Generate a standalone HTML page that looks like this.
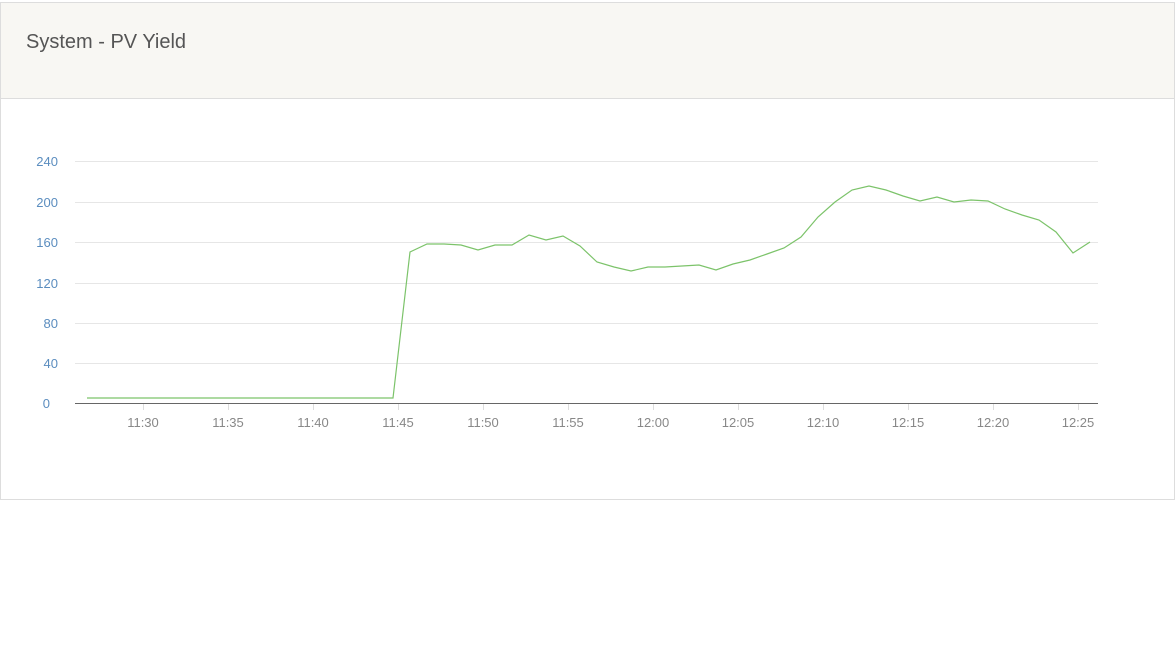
<!DOCTYPE html><html><head><style>
body{margin:0;width:1175px;height:648px;background:#fff;font-family:"Liberation Sans",sans-serif;position:relative;overflow:hidden}
.card{position:absolute;left:0;top:2px;width:1173px;height:496px;border:1px solid #ddd}
.hd{height:95px;background:#f8f7f3;border-bottom:1px solid #ddd;position:relative}
.hd span{position:absolute;left:25px;top:28px;font-size:20px;color:#555}
svg{position:absolute;left:0;top:0}
</style></head><body>
<div class="card"><div class="hd"><span>System - PV Yield</span></div></div>
<svg width="1175" height="648" font-family="Liberation Sans, sans-serif">
<g stroke="#e6e6e6" stroke-width="1">
<line x1="75" x2="1098" y1="161.5" y2="161.5"/><line x1="75" x2="1098" y1="202.5" y2="202.5"/><line x1="75" x2="1098" y1="242.5" y2="242.5"/><line x1="75" x2="1098" y1="283.5" y2="283.5"/><line x1="75" x2="1098" y1="323.5" y2="323.5"/><line x1="75" x2="1098" y1="363.5" y2="363.5"/>
</g>
<g stroke="#ddd"><line x1="143.5" x2="143.5" y1="404" y2="410"/><line x1="228.5" x2="228.5" y1="404" y2="410"/><line x1="313.5" x2="313.5" y1="404" y2="410"/><line x1="398.5" x2="398.5" y1="404" y2="410"/><line x1="483.5" x2="483.5" y1="404" y2="410"/><line x1="568.5" x2="568.5" y1="404" y2="410"/><line x1="653.5" x2="653.5" y1="404" y2="410"/><line x1="738.5" x2="738.5" y1="404" y2="410"/><line x1="823.5" x2="823.5" y1="404" y2="410"/><line x1="908.5" x2="908.5" y1="404" y2="410"/><line x1="993.5" x2="993.5" y1="404" y2="410"/><line x1="1078.5" x2="1078.5" y1="404" y2="410"/></g>
<line x1="75" x2="1098" y1="403.5" y2="403.5" stroke="#666"/>
<g fill="#5b8dbf" font-size="13" text-anchor="end"><text x="58" y="166">240</text><text x="58" y="207">200</text><text x="58" y="247">160</text><text x="58" y="288">120</text><text x="58" y="328">80</text><text x="58" y="368">40</text><text x="50" y="408">0</text></g>
<g fill="#888" font-size="13" text-anchor="middle"><text x="143" y="427">11:30</text><text x="228" y="427">11:35</text><text x="313" y="427">11:40</text><text x="398" y="427">11:45</text><text x="483" y="427">11:50</text><text x="568" y="427">11:55</text><text x="653" y="427">12:00</text><text x="738" y="427">12:05</text><text x="823" y="427">12:10</text><text x="908" y="427">12:15</text><text x="993" y="427">12:20</text><text x="1078" y="427">12:25</text></g>
<polyline fill="none" stroke="#7cc36a" stroke-width="1.2" points="87,398 393,398 410,252 427,244 444,244 461,245 478,250 495,245 512,245 529,235 546,240 563,236 580,246 597,262 614,267 631,271 648,267 665,267 682,266 699,265 716,270 733,264 750,260 767,254 784,248 801,237 818,217 835,202 852,190 869,186 886,190 903,196 920,201 937,197 954,202 971,200 988,201 1005,209 1022,215 1039,220 1056,232 1073,253 1090,242"/>
</svg>
</body></html>
